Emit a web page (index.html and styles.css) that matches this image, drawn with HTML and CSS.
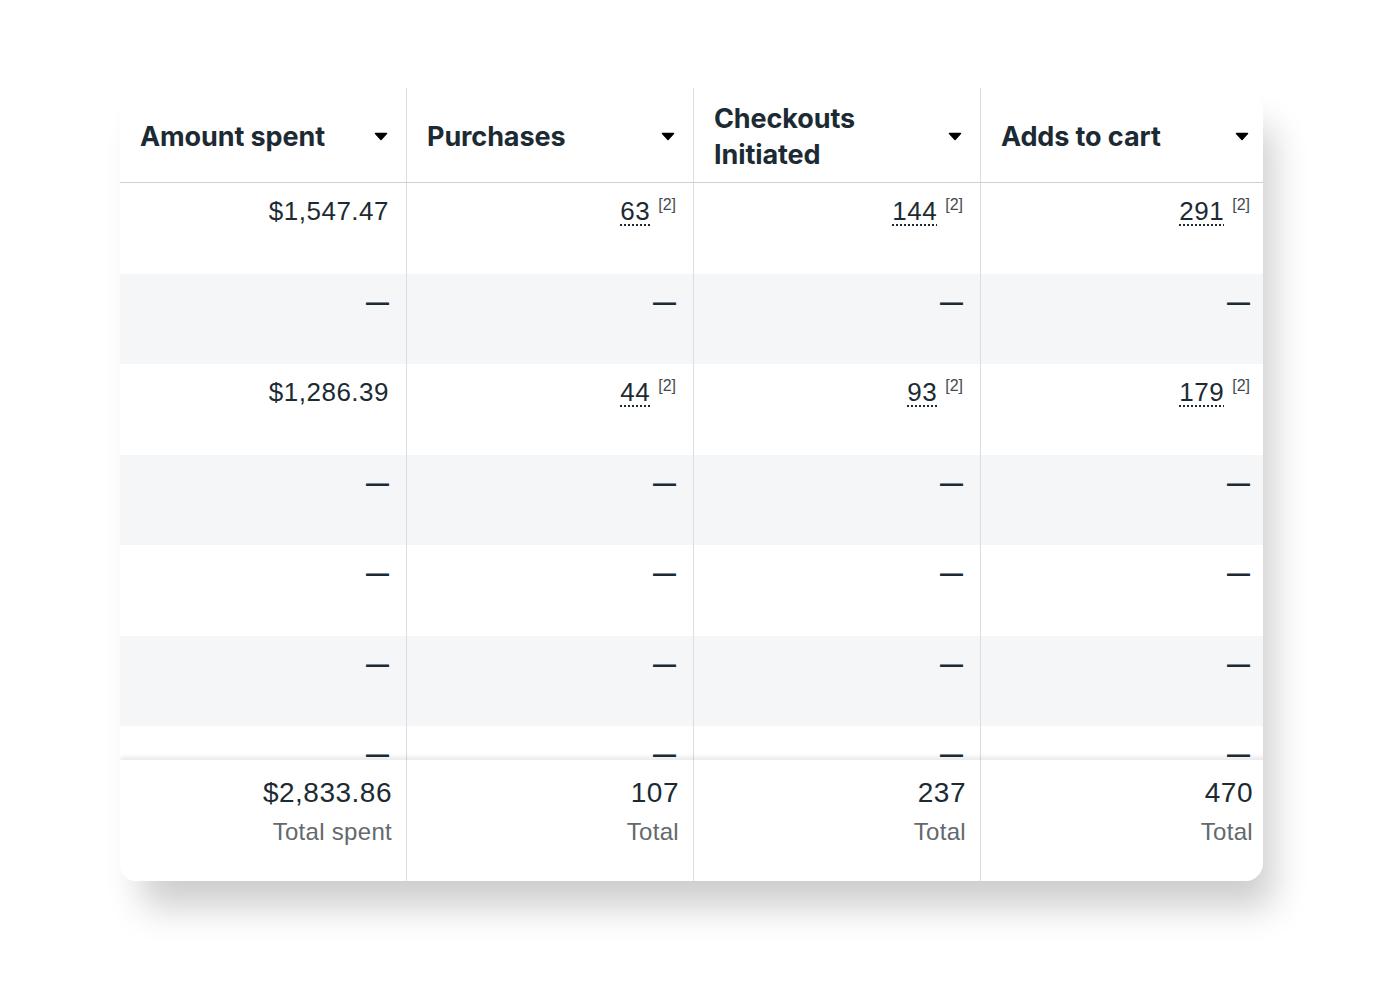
FILE: index.html
```html
<!DOCTYPE html>
<html lang="en">
<head>
<meta charset="utf-8">
<title>Ads table</title>
<link rel="stylesheet" href="styles.css">
</head>
<body>
<div class="card">
  <div class="table">
    <div class="row head">
      <div class="cell hcell"><span class="label">Amount spent</span><svg class="caret" viewBox="0 0 14 9"><path d="M1.5 1.5h11l-5.5 6z"/></svg></div>
      <div class="cell hcell"><span class="label">Purchases</span><svg class="caret" viewBox="0 0 14 9"><path d="M1.5 1.5h11l-5.5 6z"/></svg></div>
      <div class="cell hcell"><span class="label narrow">Checkouts Initiated</span><svg class="caret" viewBox="0 0 14 9"><path d="M1.5 1.5h11l-5.5 6z"/></svg></div>
      <div class="cell hcell"><span class="label">Adds to cart</span><svg class="caret" viewBox="0 0 14 9"><path d="M1.5 1.5h11l-5.5 6z"/></svg></div>
    </div>
    <div class="body">
      <div class="row data">
        <div class="cell">$1,547.47</div>
        <div class="cell"><span class="num">63</span><span class="ref">[2]</span></div>
        <div class="cell"><span class="num">144</span><span class="ref">[2]</span></div>
        <div class="cell"><span class="num">291</span><span class="ref">[2]</span></div>
      </div>
      <div class="row data alt">
        <div class="cell"><span class="dash">—</span></div><div class="cell"><span class="dash">—</span></div><div class="cell"><span class="dash">—</span></div><div class="cell"><span class="dash">—</span></div>
      </div>
      <div class="row data">
        <div class="cell">$1,286.39</div>
        <div class="cell"><span class="num">44</span><span class="ref">[2]</span></div>
        <div class="cell"><span class="num">93</span><span class="ref">[2]</span></div>
        <div class="cell"><span class="num">179</span><span class="ref">[2]</span></div>
      </div>
      <div class="row data alt">
        <div class="cell"><span class="dash">—</span></div><div class="cell"><span class="dash">—</span></div><div class="cell"><span class="dash">—</span></div><div class="cell"><span class="dash">—</span></div>
      </div>
      <div class="row data">
        <div class="cell"><span class="dash">—</span></div><div class="cell"><span class="dash">—</span></div><div class="cell"><span class="dash">—</span></div><div class="cell"><span class="dash">—</span></div>
      </div>
      <div class="row data alt">
        <div class="cell"><span class="dash">—</span></div><div class="cell"><span class="dash">—</span></div><div class="cell"><span class="dash">—</span></div><div class="cell"><span class="dash">—</span></div>
      </div>
      <div class="row data">
        <div class="cell"><span class="dash">—</span></div><div class="cell"><span class="dash">—</span></div><div class="cell"><span class="dash">—</span></div><div class="cell"><span class="dash">—</span></div>
      </div>
    </div>
    <div class="row foot">
      <div class="cell fcell"><span class="fval">$2,833.86</span><span class="flabel">Total spent</span></div>
      <div class="cell fcell"><span class="fval">107</span><span class="flabel">Total</span></div>
      <div class="cell fcell"><span class="fval">237</span><span class="flabel">Total</span></div>
      <div class="cell fcell"><span class="fval">470</span><span class="flabel">Total</span></div>
    </div>
  </div>
</div>
</body>
</html>
```
FILE: styles.css
```css
html, body {
  margin: 0;
  padding: 0;
  background: #ffffff;
}

body {
  font-family: "Liberation Sans", Arial, sans-serif;
  color: #1c2b33;
  min-height: 999px;
}

.card {
  margin: 88px 0 118px 120px;
  width: 1143px;
  height: 793px;
  background: #ffffff;
  border-radius: 0 20px 18px 16px;
  overflow: hidden;
  box-shadow: 16px 32px 36px -6px rgba(0, 0, 0, 0.2);
}

.table {
  width: 1148px;
  display: flex;
  flex-direction: column;
}

.row {
  display: grid;
  grid-template-columns: 287px 287px 287px 287px;
}

.cell {
  border-right: 1px solid #dadde1;
  box-sizing: border-box;
}

/* header */
.head {
  height: 95px;
  border-bottom: 1px solid #ced0d4;
  box-sizing: border-box;
}

.hcell {
  display: flex;
  align-items: center;
  justify-content: space-between;
  padding: 4px 18px 0 20px;
}

.label {
  font-family: "Inter", "Noto Sans", sans-serif;
  font-weight: 700;
  font-size: 27px;
  line-height: 36px;
  letter-spacing: -0.1px;
  color: #1c2b33;
}

.label.narrow {
  max-width: 190px;
}

.caret {
  width: 14px;
  height: 9px;
  margin-top: -2px;
  fill: #000000;
  stroke: #000000;
  stroke-width: 1.5;
  stroke-linejoin: round;
  flex: none;
}

/* body */
.body {
  height: 577px;
  overflow: hidden;
}

.data {
  height: 90.5px;
  background: #ffffff;
}

.data.alt {
  background: #f5f6f7;
}

.data .cell {
  display: flex;
  justify-content: flex-end;
  align-items: flex-start;
  padding: 14px 17px 0 0;
  font-size: 26px;
  line-height: 28px;
  letter-spacing: 0.5px;
  color: #1c2b33;
}

.dash {
  font-size: 23px;
  font-weight: 700;
  letter-spacing: 0;
}

.num {
  text-decoration: underline dotted #1c2b33;
  text-decoration-thickness: 2px;
  text-underline-offset: 4px;
}

.ref {
  font-size: 16px;
  line-height: 16px;
  margin-left: 8px;
  letter-spacing: 0;
  color: #444950;
}

/* footer */
.foot {
  position: relative;
  height: 121px;
  background: #ffffff;
  box-shadow: 0 -3px 5px rgba(0, 0, 0, 0.09);
}

.fcell {
  display: flex;
  flex-direction: column;
  align-items: flex-end;
  padding: 17px 14px 0 0;
}

.fval {
  font-size: 28px;
  line-height: 32px;
  letter-spacing: 0.5px;
  color: #1c2b33;
}

.flabel {
  margin-top: 8px;
  font-size: 24px;
  line-height: 30px;
  letter-spacing: 0.3px;
  color: #65686c;
}
```
